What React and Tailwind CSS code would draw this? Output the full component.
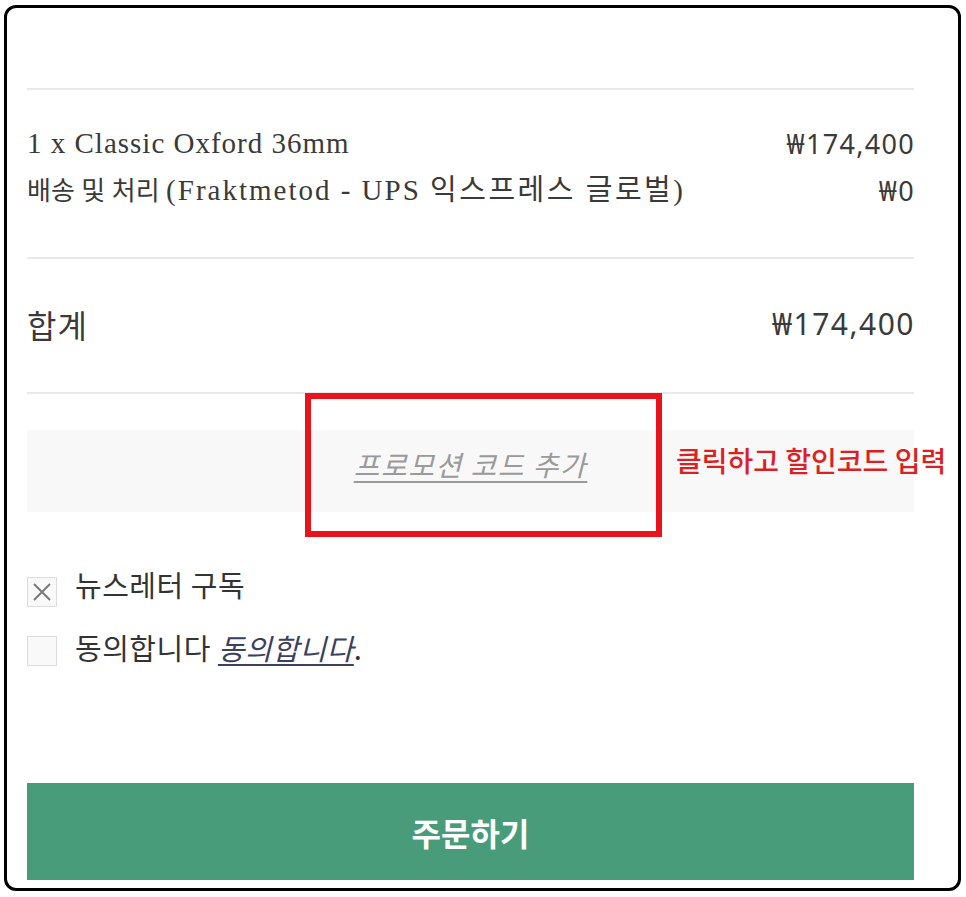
import React from "react";

const serif = { fontFamily: '"Liberation Serif", "Noto Sans CJK KR", serif' };

const Divider = () => <div className="h-[2px] bg-[#e8e8e8]" />;

const Checkbox = ({ checked }) => (
  <div className="w-[30px] h-[30px] border border-[#dcdcdc] bg-[#f9f9f9] flex items-center justify-center shrink-0">
    {checked && (
      <svg width="22" height="22" viewBox="0 0 22 22">
        <path d="M3 3 L19 19 M19 3 L3 19" stroke="#7a7a7a" strokeWidth="2" />
      </svg>
    )}
  </div>
);

export default function App() {
  return (
    <div className="w-[966px] h-[897px] bg-white pt-[5px] pl-[4px] font-['Noto_Sans_CJK_KR',sans-serif]">
      <div className="w-[957px] h-[886px] border-[3px] border-black rounded-[12px] pl-[20px] pr-[44px] pt-[80px] flex flex-col">
        <Divider />

        {/* 주문 항목 */}
        <div className="pt-[30px] pb-[42px] text-[26px] leading-[47px] text-[#3a3a3a]" style={serif}>
          <div className="flex justify-between">
            <span className="text-[29px] tracking-[1px]">1 x Classic Oxford 36mm</span>
            <span className="font-['Noto_Sans','Noto_Sans_CJK_KR',sans-serif] text-[27px] tracking-[1.3px] -mr-[1px]">₩174,400</span>
          </div>
          <div className="flex justify-between">
            <span>
              배송 및 처리 <span className="text-[29px] tracking-[2px]">(Fraktmetod - UPS </span>
              <span className="text-[29px] tracking-[2.5px]">익스프레스 글로벌</span>
              <span className="text-[29px]">)</span>
            </span>
            <span className="font-['Noto_Sans','Noto_Sans_CJK_KR',sans-serif] text-[27px] tracking-[1.3px] -mr-[1px]">₩0</span>
          </div>
        </div>

        <Divider />

        {/* 합계 */}
        <div className="h-[133px] flex items-center justify-between text-[#3a3a3a] pb-[4px]">
          <span className="text-[32px] tracking-[1px]">합계</span>
          <span className="font-['Noto_Sans','Noto_Sans_CJK_KR',sans-serif] text-[30px] tracking-[1.5px] -mr-[1px]">₩174,400</span>
        </div>

        <Divider />

        {/* 프로모션 코드 */}
        <div className="relative mt-[36px] h-[82px] bg-[#f8f8f8] flex items-center justify-center pb-[14px]">
          <span className="italic underline text-[28px] tracking-[1.5px] text-[#9a9a9a] underline-offset-[5px]">프로모션 코드 추가</span>
          <div className="absolute left-[278px] top-[-37px] w-[357px] h-[144px] border-[6px] border-[#e8131b]" />
          <span className="absolute left-[649px] top-[10px] whitespace-nowrap text-[28px] leading-[40px] font-medium text-[#dc1f22]">
            클릭하고 할인코드 입력
          </span>
        </div>

        {/* 체크박스 */}
        <div className="mt-[65px] flex flex-col gap-[29px] text-[29px] tracking-[0.5px] text-[#333]">
          <div className="flex items-center gap-[18px] h-[30px]">
            <Checkbox checked />
            <span className="-translate-y-[7px]">뉴스레터 구독</span>
          </div>
          <div className="flex items-center gap-[18px] h-[30px]">
            <Checkbox />
            <span className="-translate-y-[3px]">
              동의합니다 <span className="italic underline text-[#3c4060] underline-offset-[4px]">동의합니다</span>.
            </span>
          </div>
        </div>

        <button className="mt-auto mb-[8px] h-[97px] w-full bg-[#489c79] text-white text-[32px] font-bold">
          주문하기
        </button>
      </div>
    </div>
  );
}
